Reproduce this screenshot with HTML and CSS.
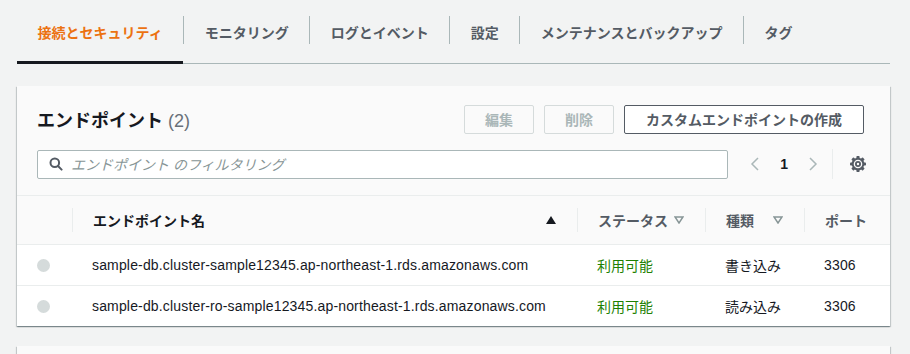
FILE: index.html
```html
<!DOCTYPE html>
<html lang="ja">

<head>
  <meta charset="UTF-8" />
  <meta name="viewport" content="width=device-width, initial-scale=1" />
  <title>接続とセキュリティ</title>
  <link rel="stylesheet" href="styles.css">
</head>

<body>
  <div class="page">
    <div class="tabs">
      <div class="tab active">接続とセキュリティ</div>
      <span class="tab-sep"></span>
      <div class="tab">モニタリング</div>
      <span class="tab-sep"></span>
      <div class="tab">ログとイベント</div>
      <span class="tab-sep"></span>
      <div class="tab">設定</div>
      <span class="tab-sep"></span>
      <div class="tab">メンテナンスとバックアップ</div>
      <span class="tab-sep"></span>
      <div class="tab">タグ</div>
    </div>

    <div class="card">
      <div class="card-header">
        <div class="header-top">
          <h2 class="title">エンドポイント <span class="count">(2)</span></h2>
          <div class="actions">
            <button class="btn disabled">編集</button>
            <button class="btn disabled">削除</button>
            <button class="btn">カスタムエンドポイントの作成</button>
          </div>
        </div>
        <div class="header-tools">
          <div class="search">
            <svg class="search-icon" width="14" height="14" viewBox="0 0 14 14">
              <circle cx="5.8" cy="5.8" r="4.3" fill="none" stroke="#545b64" stroke-width="2" />
              <line x1="9" y1="9" x2="12.6" y2="12.6" stroke="#545b64" stroke-width="2" stroke-linecap="round" />
            </svg>
            <span class="placeholder">エンドポイント のフィルタリング</span>
          </div>
          <div class="pager">
            <svg width="10" height="16" viewBox="0 0 10 16">
              <polyline points="8,2 2,8 8,14" fill="none" stroke="#aab7b8" stroke-width="1.5" />
            </svg>
            <span class="page-num">1</span>
            <svg width="10" height="16" viewBox="0 0 10 16">
              <polyline points="2,2 8,8 2,14" fill="none" stroke="#aab7b8" stroke-width="1.5" />
            </svg>
          </div>
          <div class="prefs">
            <svg width="18" height="18" viewBox="0 0 18 18">
              <g fill="#545b64">
                <rect x="7.4" y="1" width="3.2" height="3" rx="0.8" />
                <rect x="7.4" y="1" width="3.2" height="3" rx="0.8" transform="rotate(45 9 9)" />
                <rect x="7.4" y="1" width="3.2" height="3" rx="0.8" transform="rotate(90 9 9)" />
                <rect x="7.4" y="1" width="3.2" height="3" rx="0.8" transform="rotate(135 9 9)" />
                <rect x="7.4" y="1" width="3.2" height="3" rx="0.8" transform="rotate(180 9 9)" />
                <rect x="7.4" y="1" width="3.2" height="3" rx="0.8" transform="rotate(225 9 9)" />
                <rect x="7.4" y="1" width="3.2" height="3" rx="0.8" transform="rotate(270 9 9)" />
                <rect x="7.4" y="1" width="3.2" height="3" rx="0.8" transform="rotate(315 9 9)" />
              </g>
              <circle cx="9" cy="9" r="5.3" fill="none" stroke="#545b64" stroke-width="2" />
              <circle cx="9" cy="9" r="2.1" fill="none" stroke="#545b64" stroke-width="1.8" />
            </svg>
          </div>
        </div>
      </div>

      <table class="table">
        <colgroup>
          <col class="col-radio">
          <col class="col-name">
          <col class="col-status">
          <col class="col-type">
          <col class="col-port">
        </colgroup>
        <thead>
          <tr>
            <th></th>
            <th><div class="th-inner sorted"><span>エンドポイント名</span>
                <svg width="10" height="8" viewBox="0 0 10 8"><polygon points="5,0 10,8 0,8" fill="#16191f" /></svg></div></th>
            <th><div class="th-inner"><span>ステータス</span>
                <svg width="10" height="8" viewBox="0 0 10 8"><polygon points="1,1 9,1 5,7" fill="none" stroke="#879596" stroke-width="1.5" /></svg></div></th>
            <th><div class="th-inner"><span>種類</span>
                <svg width="10" height="8" viewBox="0 0 10 8"><polygon points="1,1 9,1 5,7" fill="none" stroke="#879596" stroke-width="1.5" /></svg></div></th>
            <th><div class="th-inner"><span>ポート</span></div></th>
          </tr>
        </thead>
        <tbody>
          <tr>
            <td class="radio-cell"><span class="radio"></span></td>
            <td class="name">sample-db.cluster-sample12345.ap-northeast-1.rds.amazonaws.com</td>
            <td class="available">利用可能</td>
            <td>書き込み</td>
            <td class="name">3306</td>
          </tr>
          <tr>
            <td class="radio-cell"><span class="radio"></span></td>
            <td class="name">sample-db.cluster-ro-sample12345.ap-northeast-1.rds.amazonaws.com</td>
            <td class="available">利用可能</td>
            <td>読み込み</td>
            <td class="name">3306</td>
          </tr>
        </tbody>
      </table>
    </div>

    <div class="card next-card"></div>
  </div>
</body>

</html>
```

FILE: styles.css
```css
html,
body {
  margin: 0;
  padding: 0;
  background-color: #f2f3f3;
  font-family: "Liberation Sans", "Noto Sans CJK JP", sans-serif;
  color: #16191f;
  font-size: 14px;
}

.page {
  padding: 0 20px 0 17px;
}

/* tabs */

.tabs {
  display: flex;
  align-items: center;
  height: 64px;
  border-bottom: 1px solid #aab7b8;
  box-sizing: border-box;
}

.tab {
  height: 100%;
  display: flex;
  align-items: center;
  padding: 0 20.5px;
  font-size: 14px;
  font-weight: 700;
  color: #545b64;
  box-sizing: border-box;
  white-space: nowrap;
}

.tab.active {
  color: #ec7211;
  border-bottom: 3px solid #16191f;
  padding-top: 3px;
  margin-bottom: -1px;
  height: calc(100% + 1px);
}

.tab-sep {
  width: 1px;
  height: 28px;
  background-color: #aab7b8;
  margin-top: -4px;
}

/* card */

.card {
  margin-top: 22px;
  background: white;
  box-shadow: 0 1px 1px 0 rgba(0, 28, 36, 0.3), 1px 1px 1px 0 rgba(0, 28, 36, 0.15), -1px 1px 1px 0 rgba(0, 28, 36, 0.15);
}

.card-header {
  background-color: #fafafa;
  padding: 18px 26px 16px 20px;
  border-bottom: 1px solid #eaeded;
}

.header-top {
  display: flex;
  align-items: center;
  justify-content: space-between;
  height: 30px;
}

.title {
  margin: 0;
  font-size: 18px;
  font-weight: 700;
}

.count {
  font-weight: 400;
  color: #687078;
}

.actions {
  display: flex;
  gap: 10px;
}

.btn {
  height: 29px;
  padding: 0 21px;
  font-family: inherit;
  font-size: 14px;
  font-weight: 700;
  background: white;
  color: #545b64;
  border: 1px solid #545b64;
  border-radius: 2px;
}

.btn.disabled {
  width: 70px;
  padding: 0;
  color: #aab7b8;
  border-color: #d5dbdb;
  background: #fafafa;
}

.header-tools {
  display: flex;
  align-items: center;
  margin-top: 15px;
  margin-right: -3px;
}

.search {
  flex: 1;
  height: 29px;
  display: flex;
  align-items: center;
  gap: 8px;
  padding-left: 11px;
  background: white;
  border: 1px solid #aab7b8;
  border-radius: 2px;
  box-sizing: border-box;
}

.placeholder {
  color: #879596;
  font-style: italic;
}

.pager {
  display: flex;
  align-items: center;
  gap: 20px;
  padding: 0 14px 0 22px;
}

.page-num {
  font-weight: 700;
}

.prefs {
  display: flex;
  align-items: center;
  height: 30px;
  padding-left: 16px;
  border-left: 1px solid #eaeded;
}

/* table */

.table {
  width: 100%;
  table-layout: fixed;
  border-collapse: collapse;
}

.col-radio {
  width: 55px;
}

.col-name {
  width: 505px;
}

.col-status {
  width: 128px;
}

.col-type {
  width: 99px;
}

.table th {
  height: 48px;
  padding: 0;
  background-color: #fafafa;
  border-bottom: 1px solid #eaeded;
  text-align: left;
  font-weight: 700;
  color: #545b64;
}

.th-inner {
  display: flex;
  align-items: center;
  justify-content: space-between;
  height: 24px;
  padding: 0 21px 0 20px;
  border-left: 1px solid #eaeded;
}

.th-inner.sorted {
  color: #16191f;
}

.table td {
  height: 40px;
  padding: 0 20px;
  border-bottom: 1px solid #eaeded;
  white-space: nowrap;
}

.table td.name {
  letter-spacing: 0.16px;
}

.table tbody tr:last-child td {
  border-bottom: none;
}

.table td.radio-cell {
  padding: 0 0 0 20px;
}

.radio {
  display: block;
  width: 13px;
  height: 13px;
  border-radius: 50%;
  background-color: #d5dbdb;
}

.available {
  color: #1d8102;
}

.next-card {
  margin-top: 20px;
  height: 40px;
  background-color: #fafafa;
}
```
